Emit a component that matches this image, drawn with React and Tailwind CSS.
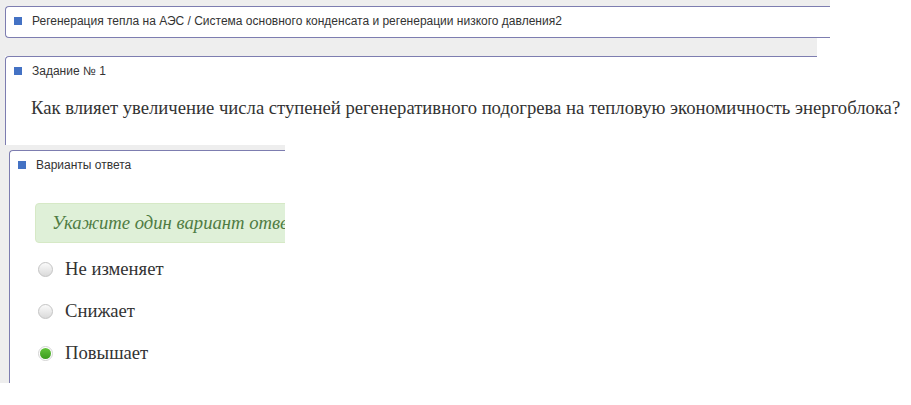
import React from 'react';

const sans = "font-['Liberation_Sans',Arial,sans-serif]";
const serif = "font-['Liberation_Serif','Times_New_Roman',serif]";

/* Синий маркер перед заголовком блока */
const Marker = () => <span className='block w-[8px] h-[8px] bg-[#4472c4] shrink-0' />;

const Radio = ({ checked }) => (
  checked ? (
    <span className='block w-[15px] h-[15px] rounded-full border border-[#d4d4d4] bg-white p-[1px] shrink-0'>
      <span className='block w-full h-full rounded-full bg-gradient-to-b from-[#62c43a] to-[#3b9b1d]' />
    </span>
  ) : (
    <span className='block w-[15px] h-[15px] rounded-full border border-[#c4c4c4] bg-gradient-to-b from-[#fafafa] to-[#dadada] shrink-0' />
  )
);

const variantes = [
  { texto: 'Не изменяет', checked: false },
  { texto: 'Снижает', checked: false },
  { texto: 'Повышает', checked: true },
];

const App = () => {
  return (
    <div className='w-[911px] h-[405px] bg-white overflow-hidden'>
      {/* Путь раздела */}
      <div className='w-[830px] bg-[#eeeeee] pt-[6px] pl-[5px]'>
        <div className='h-[32px] bg-white border border-r-0 border-[#7d7db0] rounded-l-[4px] flex items-center gap-[10px] pl-[8px] pb-[2px]'>
          <Marker />
          <span className={`${sans} text-[12px] text-[#333] leading-[14px]`}>
            Регенерация тепла на АЭС / Система основного конденсата и регенерации низкого давления2
          </span>
        </div>
      </div>
      <div className='w-[817px] h-[18px] bg-[#eeeeee]' />

      {/* Задание */}
      <div className='flex'>
        <div className='w-[5px] bg-[#eeeeee]' />
        <div className='w-[812px] h-[89px] bg-white border-l border-t border-[#7d7db0] rounded-tl-[4px] pt-[7px] pl-[8px]'>
          <div className='flex items-center gap-[10px] h-[14px]'>
            <Marker />
            <span className={`${sans} text-[12px] text-[#333] leading-[14px]`}>Задание № 1</span>
          </div>
          <p className={`${serif} text-[18.67px] text-[#333] leading-[22px] mt-[19px] ml-[17px] whitespace-nowrap`}>
            Как влияет увеличение числа ступеней регенеративного подогрева на тепловую экономичность энергоблока?
          </p>
        </div>
      </div>

      {/* Варианты ответа */}
      <div className='w-[285px] bg-[#eeeeee] pt-[5px] pl-[9px] overflow-hidden'>
        <div className='h-[233px] bg-white border-l border-t border-[#7d7db0] rounded-tl-[4px] pt-[7px]'>
          <div className='flex items-center gap-[10px] h-[14px] pl-[8px]'>
            <Marker />
            <span className={`${sans} text-[12px] text-[#333] leading-[14px]`}>Варианты ответа</span>
          </div>
          <div className='mt-[31px] ml-[25px] w-[400px] h-[40px] bg-[#dff0d8] border border-[#d6e9c6] rounded-[4px] flex items-center pl-[16px]'>
            <span className={`${serif} italic text-[18.67px] text-[#4f7c43] whitespace-nowrap`}>
              Укажите один вариант ответа
            </span>
          </div>
          <div className='mt-[5px]'>
            {variantes.map((v) => (
              <div key={v.texto} className='h-[42px] flex items-center pl-[28px] gap-[12px]'>
                <Radio checked={v.checked} />
                <span className={`${serif} text-[18.67px] text-[#333] leading-[22px]`}>{v.texto}</span>
              </div>
            ))}
          </div>
        </div>
      </div>
    </div>
  );
};

export default App;
